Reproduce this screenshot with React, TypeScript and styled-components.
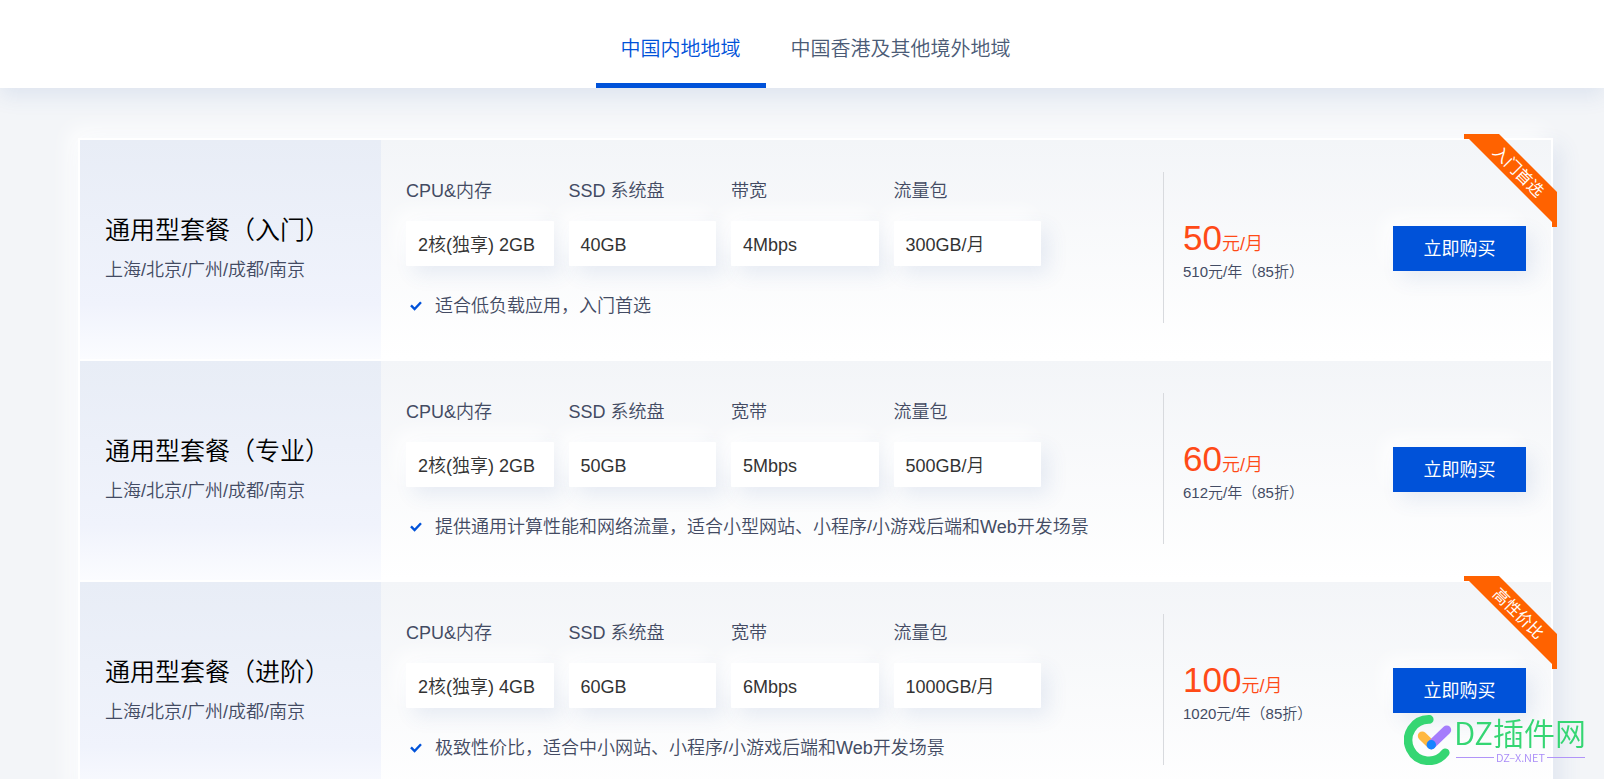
import React from "react";
import styled, { createGlobalStyle } from "styled-components";

const GlobalStyle = createGlobalStyle`
  *, *::before, *::after { box-sizing: border-box; }
  body {
    margin: 0;
    background: #f3f5f8;
    color: #434b63;
    font-family: "Liberation Sans", "Noto Sans CJK SC", sans-serif;
    font-size: 18px;
    font-weight: 350;
  }
  h2, p, ul, dl, dt, dd { margin: 0; padding: 0; font-weight: inherit; }
`;

const TabBar = styled.nav`
  display: flex;
  justify-content: center;
  height: 88px;
  padding: 0 51px 0 78px;
  background: #fff;
  box-shadow: 0 8px 20px rgba(55, 99, 170, 0.11);
`;

const Tab = styled.button<{ $active?: boolean }>`
  padding: 11px 25px 0;
  border: 0;
  border-bottom: 5px solid ${(p) => (p.$active ? "#0052d9" : "transparent")};
  background: none;
  color: ${(p) => (p.$active ? "#0052d9" : "#4b5b76")};
  font: inherit;
  font-size: 20px;
  cursor: pointer;
`;

const Main = styled.main`
  padding: 50px 51px 50px 78px;
`;

const PlanList = styled.ul`
  list-style: none;
  background: #fff;
  box-shadow: 8px 8px 20px rgba(55, 99, 170, 0.1), -8px -8px 20px #fff;
`;

const Plan = styled.li`
  position: relative;
  display: flex;
  min-height: 221px;
  border: 2px solid #fff;
  border-bottom: 0;
  background: linear-gradient(#f3f5f8, #fff);
`;

const Summary = styled.div`
  display: flex;
  flex-direction: column;
  justify-content: center;
  flex: 0 0 301px;
  padding: 0 25px;
  background: linear-gradient(#e8edf6, #f0f3fc 75%, #fbfcff);
`;

const PlanName = styled.h2`
  color: #000;
  font-size: 25px;
  line-height: 40px;
  white-space: nowrap;
`;

const Regions = styled.p`
  line-height: 40px;
  white-space: nowrap;
`;

const Details = styled.div`
  flex: 1;
  padding: 31px 25px 0;
`;

const Specs = styled.dl`
  display: grid;
  grid-template-columns: repeat(4, 1fr);
  gap: 15px;
  max-width: 635px;
`;

const SpecLabel = styled.dt`
  margin-bottom: 10px;
  line-height: 40px;
  white-space: nowrap;
`;

const SpecValue = styled.dd`
  height: 45px;
  padding: 0 12px;
  border-radius: 1px;
  background: #fff;
  box-shadow: 8px 8px 20px rgba(55, 99, 170, 0.1), -8px -8px 20px #fff;
  color: #333;
  line-height: 48px;
  white-space: nowrap;
`;

const Note = styled.p`
  display: flex;
  align-items: center;
  gap: 13px;
  margin-top: 25px;
  padding-left: 4px;
  line-height: 30px;
  white-space: nowrap;
`;

const Purchase = styled.div`
  display: flex;
  align-items: center;
  justify-content: space-between;
  flex: 0 0 388px;
  height: 151px;
  margin-top: 32px;
  padding: 2px 25px 0 19px;
  border-left: 1px solid #d8dade;
`;

const Price = styled.p`
  padding-top: 4px;
  color: #ff4a17;
  line-height: 36px;
`;

const Amount = styled.span`
  font-size: 35px;
`;

const Yearly = styled.p`
  font-size: 15px;
  line-height: 20px;
  white-space: nowrap;
`;

const BuyButton = styled.button`
  width: 133px;
  height: 45px;
  padding: 0 0 4px;
  border: 0;
  background: #0052d9;
  box-shadow: 8px 8px 20px rgba(55, 99, 170, 0.1), -8px -8px 20px #fff;
  color: #fff;
  font: inherit;
  font-weight: 400;
  cursor: pointer;
`;

const Ribbon = styled.span`
  position: absolute;
  top: -6px;
  right: -6px;
  display: grid;
  place-items: center;
  width: 93px;
  height: 93px;
  padding: 0 0 18px 16px;
  background: #ff6200;
  clip-path: polygon(0 0, 35px 0, 93px 58px, 93px 93px, 88px 93px, 88px 88px, 5px 5px, 0 5px);
  color: #fff;
  font-size: 16px;
  font-weight: 400;
  line-height: 20px;
`;

const RibbonText = styled.span`
  transform: rotate(45deg);
  white-space: nowrap;
`;

const Watermark = styled.div`
  position: fixed;
  right: 18px;
  bottom: 14px;
  display: flex;
  align-items: flex-start;
  gap: 2px;
  font-family: "Noto Sans CJK SC", sans-serif;
`;

const SiteName = styled.div`
  color: #35d673;
  font-size: 31px;
  line-height: 34px;
`;

const SiteUrl = styled.div`
  display: flex;
  align-items: center;
  gap: 2px;
  margin-top: 2px;
  padding: 0 1px 0 2px;
  color: #a88af8;
  font-size: 11px;
  line-height: 12px;
  &::before, &::after {
    content: "";
    flex: 1;
    height: 1px;
    background: #b194f8;
  }
`;

interface PlanData {
  name: string;
  specs: [string, string][];
  note: string;
  price: number;
  yearly: string;
  ribbon?: string;
}

const plans: PlanData[] = [
  {
    name: "通用型套餐（入门）",
    specs: [["CPU&内存", "2核(独享) 2GB"], ["SSD 系统盘", "40GB"], ["带宽", "4Mbps"], ["流量包", "300GB/月"]],
    note: "适合低负载应用，入门首选",
    price: 50,
    yearly: "510元/年（85折）",
    ribbon: "入门首选",
  },
  {
    name: "通用型套餐（专业）",
    specs: [["CPU&内存", "2核(独享) 2GB"], ["SSD 系统盘", "50GB"], ["宽带", "5Mbps"], ["流量包", "500GB/月"]],
    note: "提供通用计算性能和网络流量，适合小型网站、小程序/小游戏后端和Web开发场景",
    price: 60,
    yearly: "612元/年（85折）",
  },
  {
    name: "通用型套餐（进阶）",
    specs: [["CPU&内存", "2核(独享) 4GB"], ["SSD 系统盘", "60GB"], ["宽带", "6Mbps"], ["流量包", "1000GB/月"]],
    note: "极致性价比，适合中小网站、小程序/小游戏后端和Web开发场景",
    price: 100,
    yearly: "1020元/年（85折）",
    ribbon: "高性价比",
  },
];

const CheckMark = () => (
  <svg width="12" height="10" viewBox="0 0 12 10" aria-hidden="true">
    <path d="M1 4.3 4.6 8 11 1.2" fill="none" stroke="#0052d9" strokeWidth="2.4" />
  </svg>
);

const SiteLogo = () => (
  <svg width="48" height="50" viewBox="0 0 48 50" aria-hidden="true">
    <path d="M25.3 4.4A20.7 20.7 0 1 0 41.3 37.7" fill="none" stroke="#35d673" strokeWidth="8.6" strokeLinecap="round" />
    <path d="M18.3 21 27.3 29.7" stroke="#ffb840" strokeWidth="9" strokeLinecap="round" />
    <path d="M42.7 14.9 27.3 29.7" stroke="#a57dfc" strokeWidth="9" strokeLinecap="round" />
    <circle cx="27.3" cy="29.7" r="4.7" fill="#1684ff" />
  </svg>
);

export default function App() {
  return (
    <>
      <GlobalStyle />
      <TabBar>
        <Tab type="button" $active>中国内地地域</Tab>
        <Tab type="button">中国香港及其他境外地域</Tab>
      </TabBar>
      <Main>
        <PlanList>
          {plans.map((plan) => (
            <Plan key={plan.name}>
              <Summary>
                <PlanName>{plan.name}</PlanName>
                <Regions>上海/北京/广州/成都/南京</Regions>
              </Summary>
              <Details>
                <Specs>
                  {plan.specs.map(([label, value]) => (
                    <div key={label}>
                      <SpecLabel>{label}</SpecLabel>
                      <SpecValue>{value}</SpecValue>
                    </div>
                  ))}
                </Specs>
                <Note>
                  <CheckMark />
                  {plan.note}
                </Note>
              </Details>
              <Purchase>
                <div>
                  <Price><Amount>{plan.price}</Amount>元/月</Price>
                  <Yearly>{plan.yearly}</Yearly>
                </div>
                <BuyButton type="button">立即购买</BuyButton>
              </Purchase>
              {plan.ribbon && (
                <Ribbon><RibbonText>{plan.ribbon}</RibbonText></Ribbon>
              )}
            </Plan>
          ))}
        </PlanList>
      </Main>
      <Watermark>
        <SiteLogo />
        <div>
          <SiteName>DZ插件网</SiteName>
          <SiteUrl>DZ–X.NET</SiteUrl>
        </div>
      </Watermark>
    </>
  );
}
